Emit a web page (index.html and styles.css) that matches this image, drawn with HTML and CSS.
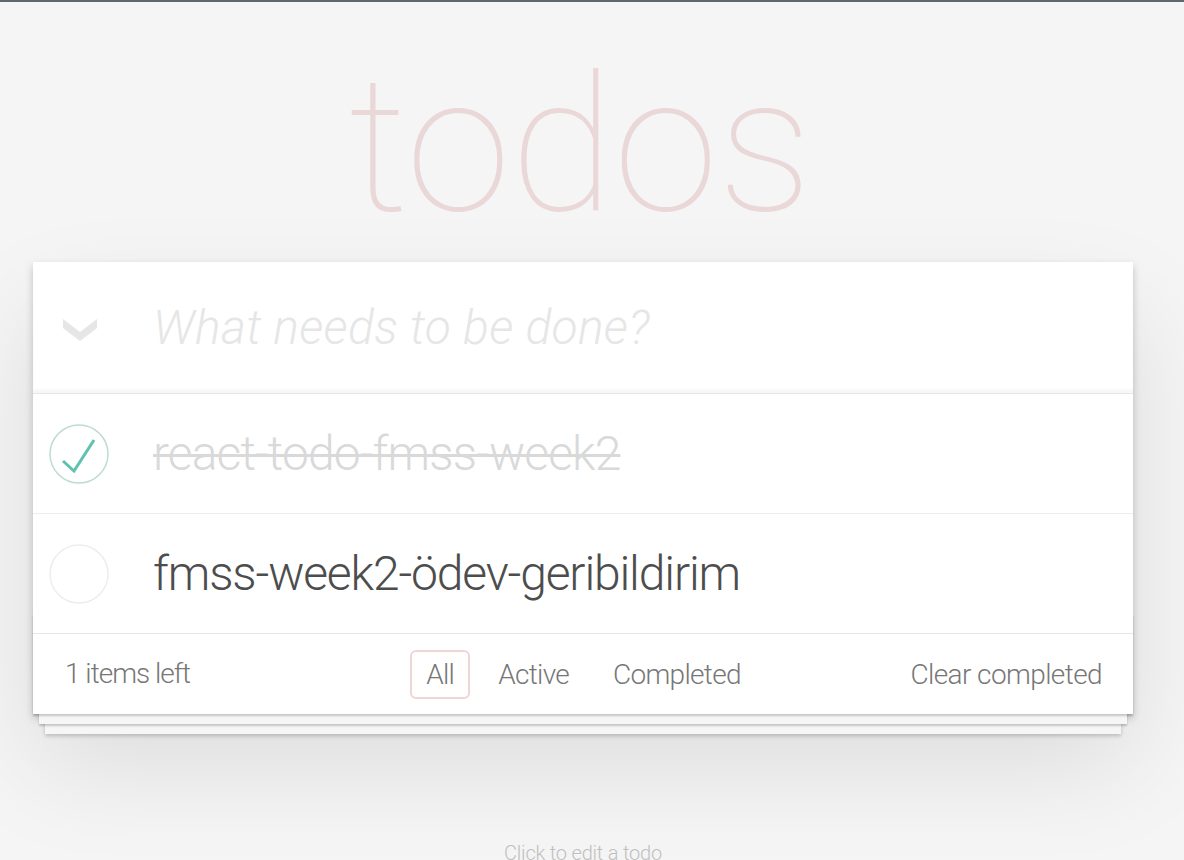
FILE: index.html
```html
<!DOCTYPE html>
<html lang="tr">
<head>
<meta charset="utf-8">
<title>todos</title>
<link rel="stylesheet" href="styles.css">
</head>
<body>
<div class="page">
  <h1 class="title">todos</h1>
  <section class="todoapp">
    <header class="header">
      <label class="toggle-all" aria-label="Mark all as complete">
        <svg width="34" height="22" viewBox="0 0 34 22"><polygon points="0,0 17,13 34,0 34,9 17,22 0,9" fill="#e6e6e6"/></svg>
      </label>
      <input class="new-todo" placeholder="What needs to be done?">
    </header>
    <section class="main">
      <ul class="todo-list">
        <li class="todo completed">
          <span class="toggle">
            <svg width="60" height="60" viewBox="0 0 60 60"><circle cx="30" cy="30" r="29" fill="none" stroke="#bddad5" stroke-width="1.5"/><polyline points="14,37 25,47 45,16" fill="none" stroke="#5dc2af" stroke-width="3"/></svg>
          </span>
          <label class="todo-text">react-todo-fmss-week2</label>
        </li>
        <li class="todo">
          <span class="toggle">
            <svg width="60" height="60" viewBox="0 0 60 60"><circle cx="30" cy="30" r="29" fill="none" stroke="#ededed" stroke-width="1.5"/></svg>
          </span>
          <label class="todo-text">fmss-week2-ödev-geribildirim</label>
        </li>
      </ul>
    </section>
    <footer class="footer">
      <span class="todo-count">1 items left</span>
      <ul class="filters">
        <li><a class="filter selected">All</a></li>
        <li><a class="filter">Active</a></li>
        <li><a class="filter">Completed</a></li>
      </ul>
      <button class="clear-completed">Clear completed</button>
    </footer>
  </section>
  <footer class="info">
    <p>Click to edit a todo</p>
  </footer>
</div>
</body>
</html>
```
FILE: styles.css
```css
html, body {
  margin: 0;
  padding: 0;
}
body {
  background: #f5f5f5;
  border-top: 2px solid #5f6770;
  font-family: Roboto, "Helvetica Neue", Arial, sans-serif;
  font-weight: 300;
  color: #4d4d4d;
  line-height: 1.4;
}
.page {
  padding: 0 51px 0 33px;
}
.title {
  margin: 43px 0 17px;
  height: 200px;
  font-size: 190px;
  line-height: 200px;
  font-weight: 100;
  letter-spacing: -0.5px;
  text-align: center;
  padding-right: 6px;
  color: rgba(175, 47, 47, 0.15);
}
.todoapp {
  background: #fff;
  position: relative;
  box-shadow: 0 4px 8px 0 rgba(0, 0, 0, 0.2), 0 50px 100px 0 rgba(0, 0, 0, 0.1);
}
.header {
  display: flex;
  align-items: center;
  height: 131px;
  box-shadow: inset 0 -4px 2px rgba(0, 0, 0, 0.03);
}
.toggle-all {
  width: 120px;
  padding-left: 30px;
  padding-top: 4px;
  box-sizing: border-box;
  display: flex;
  align-items: center;
}
.toggle-all svg { display: block; }
.new-todo {
  flex: 1;
  border: 0;
  outline: none;
  background: transparent;
  padding: 0 32px 0 0;
  height: 67px;
  font-family: Roboto, "Helvetica Neue", Arial, sans-serif;
  font-weight: 300;
  font-size: 48px;
  color: #4d4d4d;
  letter-spacing: 0.3px;
}
.new-todo::placeholder {
  font-style: italic;
  color: #e6e6e6;
  letter-spacing: 0.3px;
}
.main {
  border-top: 1px solid #e6e6e6;
}
.todo-list {
  list-style: none;
  margin: 0;
  padding: 0;
}
.todo {
  display: flex;
  align-items: center;
  height: 119px;
  border-bottom: 1px solid #ededed;
}
.todo:last-child {
  border-bottom: none;
}
.toggle {
  width: 120px;
  padding-left: 16px;
  box-sizing: border-box;
  display: flex;
  align-items: center;
}
.toggle svg { display: block; }
.todo-text {
  font-size: 48px;
  line-height: 59px;
  font-weight: 300;
  letter-spacing: -1.15px;
  color: #4d4d4d;
}
.completed .todo-text {
  color: #d9d9d9;
  letter-spacing: -0.9px;
  text-decoration: line-through;
  text-decoration-thickness: 3px;
}
.footer {
  position: relative;
  height: 80px;
  padding: 0 31px 0 32px;
  border-top: 1px solid #e6e6e6;
  display: grid;
  grid-template-columns: 1fr auto 1fr;
  align-items: center;
  color: #777;
  font-size: 28px;
  letter-spacing: -0.7px;
}
.footer::before {
  content: "";
  position: absolute;
  left: 0;
  right: 0;
  bottom: 0;
  height: 100px;
  overflow: hidden;
  pointer-events: none;
  box-shadow: 0 2px 2px rgba(0, 0, 0, 0.2),
              0 16px 0 -6px #f6f6f6,
              0 18px 2px -6px rgba(0, 0, 0, 0.2),
              0 32px 0 -12px #f6f6f6,
              0 34px 4px -12px rgba(0, 0, 0, 0.2);
}
.todo-count {
  justify-self: start;
  position: relative;
  letter-spacing: -1px;
}
.filters {
  list-style: none;
  margin: 0;
  padding: 0;
  display: flex;
  position: relative;
}
.filter {
  display: block;
  margin: 0 6px;
  padding: 3px 14px;
  border: 2px solid transparent;
  border-radius: 6px;
  line-height: 39px;
  color: #777;
}
.filter.selected {
  border-color: rgba(175, 47, 47, 0.2);
}
.clear-completed {
  justify-self: end;
  position: relative;
  border: 0;
  background: none;
  padding: 0;
  font-family: Roboto, "Helvetica Neue", Arial, sans-serif;
  font-weight: 300;
  font-size: 28px;
  letter-spacing: -0.6px;
  color: #777;
}
.info {
  margin-top: 129px;
  text-align: center;
  font-size: 20px;
  line-height: 20px;
  letter-spacing: -0.2px;
  color: #bfbfbf;
  text-shadow: 0 1px 0 rgba(255, 255, 255, 0.5);
}
.info p {
  margin: 0;
}
```
